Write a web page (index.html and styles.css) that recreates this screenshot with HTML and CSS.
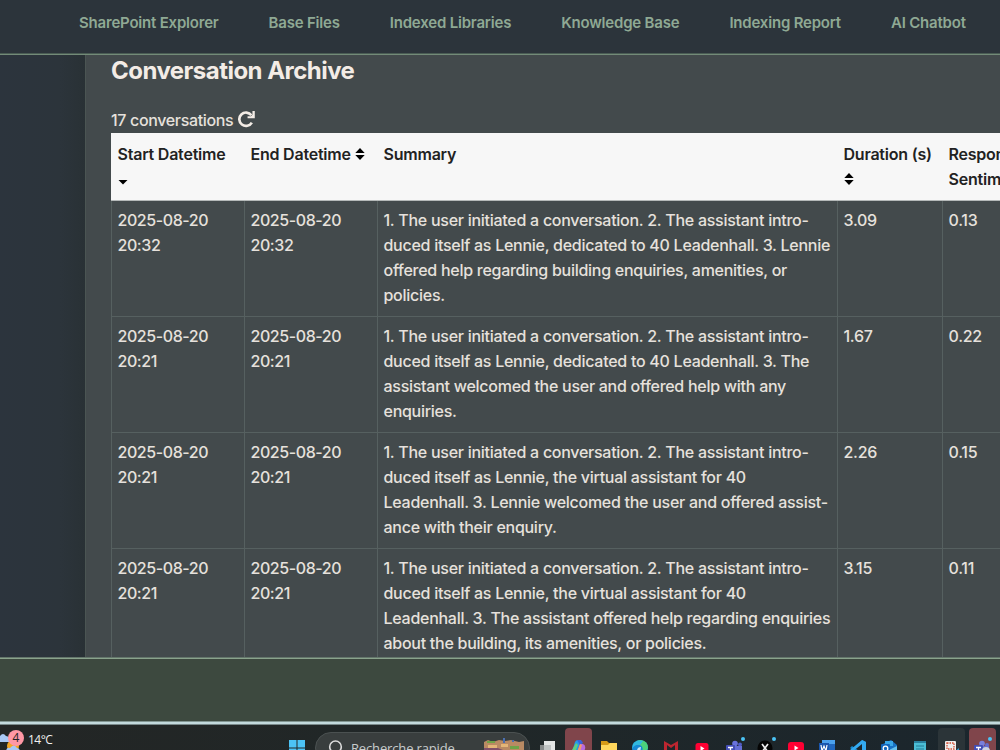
FILE: index.html
```html
<!DOCTYPE html>
<html lang="en">

<head>
  <meta charset="utf-8">
  <meta name="viewport" content="width=device-width, initial-scale=1.0">
  <title>Conversation Archive</title>
  <link rel="stylesheet" href="styles.css">
</head>

<body>
  <header class="navbar">
    <nav class="nav-links">
      <a class="nav-link">SharePoint Explorer</a>
      <a class="nav-link">Base Files</a>
      <a class="nav-link">Indexed Libraries</a>
      <a class="nav-link">Knowledge Base</a>
      <a class="nav-link">Indexing Report</a>
      <a class="nav-link">AI Chatbot</a>
    </nav>
  </header>

  <main class="content">
    <section class="panel">
      <h1 class="title">Conversation Archive</h1>
      <div class="count">17 conversations
        <svg class="refresh" viewBox="0 0 16 16"><path d="M13 10.9A6.3 6.3 0 1 1 12.6 4" fill="none" stroke="currentColor" stroke-width="2.5"/><path d="M15.8 0v6.8H9V4.9h3.2L13.6 3.5V0z" fill="currentColor"/></svg>
      </div>
      <table class="archive">
        <colgroup>
          <col class="col-date">
          <col class="col-date">
          <col class="col-summary">
          <col class="col-duration">
          <col class="col-sentiment">
        </colgroup>
        <thead>
          <tr>
            <th>Start Datetime <svg class="sort" viewBox="0 0 10 14"><path d="M.5 8h9L5 12.6z"/></svg></th>
            <th class="nowrap">End Datetime <svg class="sort" viewBox="0 0 10 14"><path d="M.3 6h9.4L5 1zM.3 8h9.4L5 13z"/></svg></th>
            <th>Summary</th>
            <th>Duration (s) <svg class="sort" viewBox="0 0 10 14"><path d="M.3 6h9.4L5 1zM.3 8h9.4L5 13z"/></svg></th>
            <th>Response Sentiment</th>
          </tr>
        </thead>
        <tbody>
          <tr>
            <td class="date">2025-08-20 20:32</td>
            <td class="date">2025-08-20 20:32</td>
            <td class="nowrap">1. The user initiated a conversation. 2. The assistant intro-<br>duced itself as Lennie, dedicated to 40 Leadenhall. 3. Lennie<br>offered help regarding building enquiries, amenities, or<br>policies.</td>
            <td>3.09</td>
            <td>0.13</td>
          </tr>
          <tr>
            <td class="date">2025-08-20 20:21</td>
            <td class="date">2025-08-20 20:21</td>
            <td class="nowrap">1. The user initiated a conversation. 2. The assistant intro-<br>duced itself as Lennie, dedicated to 40 Leadenhall. 3. The<br>assistant welcomed the user and offered help with any<br>enquiries.</td>
            <td>1.67</td>
            <td>0.22</td>
          </tr>
          <tr>
            <td class="date">2025-08-20 20:21</td>
            <td class="date">2025-08-20 20:21</td>
            <td class="nowrap">1. The user initiated a conversation. 2. The assistant intro-<br>duced itself as Lennie, the virtual assistant for 40<br>Leadenhall. 3. Lennie welcomed the user and offered assist-<br>ance with their enquiry.</td>
            <td>2.26</td>
            <td>0.15</td>
          </tr>
          <tr>
            <td class="date">2025-08-20 20:21</td>
            <td class="date">2025-08-20 20:21</td>
            <td class="nowrap">1. The user initiated a conversation. 2. The assistant intro-<br>duced itself as Lennie, the virtual assistant for 40<br>Leadenhall. 3. The assistant offered help regarding enquiries<br>about the building, its amenities, or policies.</td>
            <td>3.15</td>
            <td>0.11</td>
          </tr>
        </tbody>
      </table>
    </section>
  </main>

  <footer class="footer"></footer>

  <div class="taskbar">
    <div class="weather">
      <svg class="weather-icon" viewBox="0 0 24 24">
        <circle cx="13" cy="18" r="6" fill="#f5a623"/>
        <path d="M0 14V8q3-4 6 0 4 0 4 6z" fill="#a9c8f5"/>
        <path d="M6 24q0-5 4-4 4-5 7 0 3 0 3 4z" fill="#a9c8f5"/>
      </svg>
      <span class="badge">4</span>
      <span class="temp">14°C</span>
    </div>

    <svg class="start" viewBox="0 0 16 16"><path d="M0 0h7.5v7.5H0zM8.5 0H16v7.5H8.500zM0 8.500h7.500V16H0zM8.500 8.500H16V16H8.500z" fill="#4cc2f5"/></svg>

    <div class="search">
      <svg class="search-icon" viewBox="0 0 16 16"><circle cx="8.500" cy="6.800" r="5.800" fill="none" stroke="#dcdcdc" stroke-width="1.600"/><path d="M4.500 11 .5 15.500" stroke="#dcdcdc" stroke-width="1.600"/></svg>
      <span class="search-text">Recherche rapide</span>
      <svg class="search-art" viewBox="0 0 42 16">
        <path d="M0 3 4 1l5 2 6-2 6 1 6-1 8 2 5-1v14H0z" fill="#b98a63"/>
        <path d="M3 2h8v2H3zM26 7h9v3h-9z" fill="#6fa348"/>
        <path d="M19-1h2v5h-2zM28 1h2v2h-2z" fill="#4a6fb0"/>
        <path d="M0 9h14l5 2h21v5H0z" fill="#80506a"/>
        <path d="M4 6h9v3H4zM17 5h7v3h-7z" fill="#e3b577"/>
      </svg>
    </div>

    <div class="apps">
      <div class="app"><svg viewBox="0 0 20 20"><path d="M3 7h11v12H3z" fill="#858989"/><path d="M7 3h11v12H7z" fill="#e3e5e5"/><path d="M7 7h7v8H7z" fill="#bfc3c3"/></svg></div>
      <div class="app app-alert"><svg viewBox="0 0 20 20"><path d="M4 14 7 4q1-2 3-2h3L9 15z" fill="#249be8"/><path d="M9 2h3q2 0 3 3l-3 2z" fill="#3862dd"/><path d="m4 12 4-7 2 2-4 10z" fill="#60cf81"/><path d="M12 6h3q3 1 2 5l-3 7H8z" fill="#b96adf"/><path d="m9 14 3-8 2 1-3 10z" fill="#f19a70"/></svg></div>
      <div class="app"><svg viewBox="0 0 20 20"><path d="M2 3h6l2 2h8v5H2z" fill="#d69a16"/><path d="M2 7h7l2-2h7v13H2z" fill="#ffd75c"/></svg></div>
      <div class="app"><svg viewBox="0 0 20 20"><circle cx="10" cy="10" r="8" fill="#1688d3"/><path d="M3 7Q6 2 11 2q7 1 7 8-1 4-6 3 2-4-2-6-4-1-7 0z" fill="#4bd27b"/><path d="M3 6Q7 1 13 3l-3 4q-5-1-8 4z" fill="#31b8df"/><path d="M7 13q0-4 4-4l-1 6 5 3Q8 19 7 13z" fill="#c7e6f5"/></svg></div>
      <div class="app"><svg viewBox="0 0 20 20"><path d="M3 3l7 4 7-4v15h-3V7l-4 3-4-3v11H3z" fill="#bd2630"/></svg></div>
      <div class="app"><svg viewBox="0 0 20 20"><rect x="3.500" y="5" width="13" height="11" rx="2.500" fill="#ff0033"/><path d="M8.500 8v5l4-2.500z" fill="#fff"/></svg></div>
      <div class="app"><svg viewBox="0 0 20 20"><circle cx="11" cy="5.500" r="2.800" fill="#6972dd"/><circle cx="16" cy="6.500" r="2" fill="#515cc5"/><path d="M7 8h11v5q-1 5-6 5H7z" fill="#656ed5"/><rect x="2" y="7" width="9" height="9" rx="1" fill="#434eb5"/><path d="M4 9.500h5M6.500 9.500v5" stroke="#fff" stroke-width="1.300"/></svg><span class="dot"></span></div>
      <div class="app"><svg viewBox="0 0 20 20"><circle cx="10" cy="10" r="7.500" fill="#050505"/><path d="m7 6 6 8M13 6l-6 8" stroke="#ededed" stroke-width="1.700"/></svg><span class="dot"></span></div>
      <div class="app"><svg viewBox="0 0 20 20"><rect x="2" y="4" width="16" height="12" rx="3" fill="#ff0033"/><path d="M8.500 7.500v5l4-2.500z" fill="#fff"/></svg></div>
      <div class="app"><svg viewBox="0 0 20 20"><rect x="5" y="2" width="13" height="16" rx="1" fill="#2167bd"/><path d="M5 2h13v4H5z" fill="#4ba1ed"/><rect x="2" y="5" width="10" height="10" fill="#1956ad"/><path d="m4 7 1 6 2-5 2 5 1-6" fill="none" stroke="#fff" stroke-width="1.200"/></svg></div>
      <div class="app"><svg viewBox="0 0 20 20"><path d="m14 2 4 2v13l-4 2-12-9 2-2 10 7z" fill="#168bd2"/><path d="m14 2 4 2v13l-4 2V6L4 14l-2-2z" fill="#33aaf1"/></svg></div>
      <div class="app"><svg viewBox="0 0 20 20"><path d="M4 6l8-4 6 5v11H5z" fill="#1872c4"/><path d="M6 3h8v5H6z" fill="#39a7e7"/><path d="m10 12 8-4v10H8z" fill="#66c2ee"/><rect x="2" y="6" width="9" height="9" rx="1" fill="#1266bc"/><circle cx="6.500" cy="10.500" r="2.300" fill="none" stroke="#fff" stroke-width="1.300"/></svg></div>
      <div class="app"><svg viewBox="0 0 20 20"><path d="M4 3h12v15H4z" fill="#4bbdd5"/><path d="M4 3h12v2H4z" fill="#297f9d"/><path d="M6 8h8M6 11h8" stroke="#277c95"/></svg></div>
      <div class="app app-open"><svg viewBox="0 0 20 20"><rect x="4" y="3" width="11" height="13" rx="1" fill="#eee"/><rect x="6" y="5" width="7" height="6" fill="none" stroke="#d55136" stroke-width="1.300" stroke-dasharray="1.500 1"/><path d="m12 15 6-5v8h-6z" fill="#3199cf"/></svg></div>
      <div class="app app-alert"><svg viewBox="0 0 20 20"><circle cx="10" cy="5.500" r="2.800" fill="#7980dc"/><circle cx="15" cy="7" r="2" fill="#656dcc"/><path d="M7 8h10v9H7z" fill="#656dcc"/><rect x="2" y="7" width="9" height="9" rx="1" fill="#434eb5"/><path d="M4 9.500h5M6.500 9.500v5" stroke="#fff" stroke-width="1.300"/><circle cx="14" cy="13" r="4" fill="#ccd3e1"/></svg><span class="dot"></span></div>
    </div>
  </div>
</body>

</html>
```
FILE: styles.css
```css
* {
  box-sizing: border-box;
}

body {
  margin: 0;
  width: 1000px;
  height: 750px;
  display: flex;
  flex-direction: column;
  overflow: hidden;
  font-family: Inter, "Liberation Sans", sans-serif;
  font-size: 16px;
  font-weight: 500;
  letter-spacing: -0.27px;
  color: #e6e1dc;
  background-color: #2c343b;
}

.navbar {
  height: 55px;
  flex: none;
  padding: 13px 0 0 79px;
  border-bottom: 1px solid #738b78;
  box-shadow: inset 0 -1px #4a5c54;
  background-color: #2c343b;
}

.nav-links {
  display: flex;
  gap: 50px;
}

.nav-link {
  font-size: 15px;
  font-weight: 570;
  line-height: 20px;
  letter-spacing: -0.2px;
  color: #8fa994;
  white-space: nowrap;
}

.content {
  height: 602px;
  flex: none;
  overflow: hidden;
  padding-left: 85px;
  background: linear-gradient(to right, #2c343d 0, #2c343b 60px, #293135 85px);
}

.panel {
  width: 1100px;
  height: 700px;
  padding: 1px 0 0 25px;
  border-left: 1px solid #4b5553;
  background-color: #434a4c;
}

.title {
  margin: 0;
  font-size: 24px;
  line-height: 30px;
  font-weight: 650;
  letter-spacing: -0.53px;
  color: #f3ece6;
}

.count {
  display: flex;
  align-items: center;
  gap: 5px;
  height: 25px;
  margin-top: 21px;
  margin-bottom: 1px;
  font-weight: 450;
  letter-spacing: -0.35px;
}

.refresh {
  width: 17px;
  height: 17px;
  color: #f3ece6;
}

.archive {
  width: 991px;
  table-layout: fixed;
  border-collapse: collapse;
  line-height: 25px;
}

.col-date {
  width: 133px;
}

.col-summary {
  width: 460px;
}

.col-duration {
  width: 105px;
}

.col-sentiment {
  width: 160px;
}

.archive th,
.archive td {
  padding: 7px 6px 8px 5.5px;
  border: 1px solid #566060;
  text-align: left;
  vertical-align: top;
}

.archive .date {
  letter-spacing: -0.42px;
}

.archive th {
  padding-top: 8px;
  border-color: #f7f7f7;
  border-bottom-color: #b5b9b9;
  font-weight: 600;
  letter-spacing: -0.22px;
  color: #222;
  background-color: #f7f7f7;
}

.archive .nowrap {
  white-space: nowrap;
}

.sort {
  width: 10px;
  height: 14px;
  vertical-align: -1px;
}

.footer {
  height: 64px;
  flex: none;
  border-top: 1px solid #64766b;
  box-shadow: inset 0 1px #8aa38c;
  background-color: #3d493f;
}

.taskbar {
  height: 29px;
  flex: none;
  display: flex;
  padding-top: 3px;
  border-top: 1px solid #839793;
  box-shadow: inset 0 2px #c3dadd, inset 0 3px #79898a;
  background: linear-gradient(to right, #232625, #202728 50%, #1b262d);
}

.weather {
  position: relative;
  width: 289px;
  flex: none;
  padding-left: 28px;
  letter-spacing: 0;
}

.weather-icon {
  position: absolute;
  left: 0;
  top: 3px;
  width: 24px;
  height: 24px;
}

.badge {
  position: absolute;
  left: 8px;
  top: 5px;
  width: 16px;
  height: 16px;
  border-radius: 50%;
  font: 12px/16px "Open Sans", sans-serif;
  text-align: center;
  color: #222;
  background-color: #ff98a5;
}

.temp {
  display: block;
  padding-top: 7px;
  font: 12px/16px "Open Sans", sans-serif;
  letter-spacing: -0.5px;
  color: #f2f2f2;
}

.start {
  width: 16px;
  height: 16px;
  flex: none;
  margin-top: 15px;
}

.search {
  display: flex;
  width: 215px;
  height: 32px;
  flex: none;
  margin: 7px 0 0 10px;
  padding-left: 11px;
  border: 1px solid #4b5151;
  border-radius: 16px;
  background-color: #393e3e;
}

.search-icon {
  width: 16px;
  height: 16px;
  flex: none;
  margin-top: 7px;
}

.search-text {
  width: 141px;
  flex: none;
  padding: 6px 0 0 8px;
  font: 13px/18px "Open Sans", sans-serif;
  letter-spacing: -0.15px;
  color: #c8cccc;
}

.search-art {
  width: 42px;
  height: 16px;
  flex: none;
  margin-top: 6px;
  overflow: visible;
}

.apps {
  display: flex;
  margin-left: 1.5px;
}

.app {
  position: relative;
  width: 31.1px;
  height: 32px;
  flex: none;
  padding: 13px 5.5px 0;
}

.app svg {
  display: block;
  width: 20px;
  height: 20px;
}

.app-alert,
.app-open {
  width: 27px;
  height: 34px;
  margin: 3px 2.05px 0;
  padding: 10px 3.5px 0;
  border-radius: 4px;
  background-color: #80454b;
}

.app-open {
  background-color: #2b3438;
}

.dot {
  position: absolute;
  right: 4px;
  top: 12px;
  width: 4px;
  height: 4px;
  border-radius: 50%;
  background-color: #4bc3f5;
}

.app-alert .dot {
  top: 9px;
}
```
